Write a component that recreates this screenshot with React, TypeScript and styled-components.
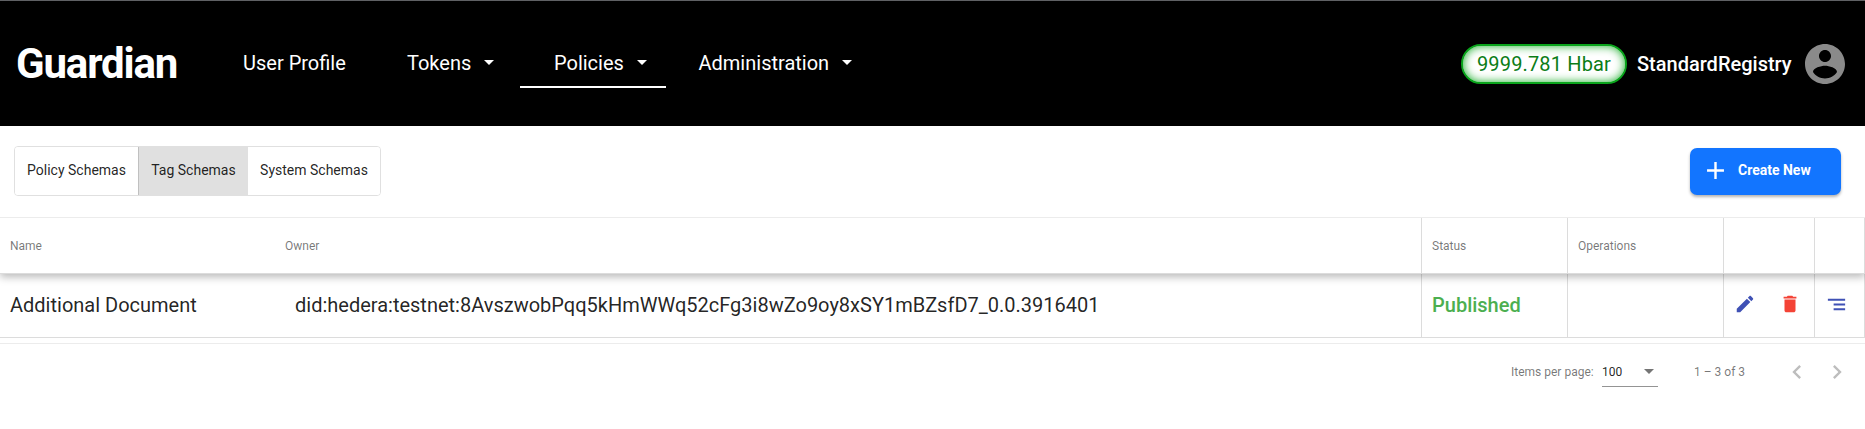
import React from "react";
import styled, { createGlobalStyle } from "styled-components";

const GlobalStyle = createGlobalStyle`
  * { box-sizing: border-box; }
  body { margin: 0; background: #fff; font-family: Roboto, "Liberation Sans", sans-serif; color: rgba(0, 0, 0, 0.87); }
  button { font: inherit; color: inherit; background: none; border: 0; padding: 0; }
`;

const Page = styled.div`
  height: 429px;
  overflow: hidden;
  white-space: nowrap;
`;

const Header = styled.header`
  display: flex;
  align-items: center;
  height: 126px;
  padding: 0 16px 0 16px;
  border-top: 1px solid #5f6164;
  background: #000;
  color: #fff;
`;

const Brand = styled.div`
  width: 193px;
  font-size: 42px;
  font-weight: 700;
  line-height: 50px;
  letter-spacing: -1.15px;
`;

const Nav = styled.nav`
  display: flex;
  flex: 1;
  margin-top: -1px;
`;

const NavItem = styled.a<{ $width: number; $active?: boolean; $start?: number; $end?: number }>`
  display: flex;
  align-items: center;
  justify-content: space-between;
  width: ${(p) => p.$width}px;
  height: 50px;
  padding: 0 ${(p) => p.$end ?? 19}px 1px ${(p) => p.$start ?? 34}px;
  border-bottom: 2px solid ${(p) => (p.$active ? "#fff" : "transparent")};
  border-top: 2px solid transparent;
  font-size: 20px;
`;

const Caret = styled.span<{ $color?: string }>`
  border: 5px solid transparent;
  border-top-color: ${(p) => p.$color ?? "#fff"};
  border-bottom-width: 0;
`;

const Balance = styled.div`
  display: flex;
  align-items: center;
  justify-content: center;
  width: 166px;
  height: 40px;
  margin-right: 10px;
  border: 2px solid #0aa51c;
  border-radius: 20px;
  background: #fff;
  box-shadow: inset 0 0 10px 0 #1fae2e;
  color: #0b7d17;
  font-size: 20px;
  letter-spacing: 0.15px;
`;

const UserName = styled.div`
  width: 164px;
  font-size: 20px;
  font-weight: 500;
`;

const Toolbar = styled.div`
  display: flex;
  justify-content: space-between;
  align-items: flex-start;
  height: 91px;
  padding: 20px 24px 0 14px;
`;

const Tabs = styled.div`
  display: flex;
  height: 50px;
  border: 1px solid #e0e0e0;
  border-radius: 4px;
  overflow: hidden;
`;

const Tab = styled.button<{ $width: number; $active?: boolean }>`
  width: ${(p) => p.$width}px;
  padding-bottom: 2px;
  background: ${(p) => (p.$active ? "#e0e0e0" : "#fff")};
  border-left: ${(p) => (p.$active ? "1px solid #c0c0c0" : "0")};
  font-size: 14px;
`;

const CreateButton = styled.button`
  display: flex;
  align-items: center;
  width: 151px;
  height: 47px;
  margin-top: 2px;
  padding: 0 0 3px 11px;
  gap: 8px;
  border-radius: 7px;
  background: #1275ff;
  box-shadow: 0 2px 3px rgba(0, 0, 0, 0.3);
  color: #fff;
  font-size: 14px;
  font-weight: 700;
`;

const Table = styled.div`
  border-top: 1px solid #ececec;
  overflow: hidden;
`;

const Row = styled.div<{ $head?: boolean }>`
  display: grid;
  grid-template-columns: 275px 1146px 146px 156px 91px 51px;
  height: ${(p) => (p.$head ? 56 : 64)}px;
  position: relative;
  z-index: ${(p) => (p.$head ? 1 : 0)};
  background: #fff;
  border-bottom: 1px solid #dcdcdc;
  box-shadow: ${(p) => (p.$head ? "0 3px 8px rgba(0, 0, 0, 0.28)" : "none")};
  font-size: ${(p) => (p.$head ? 12 : 20)}px;
  color: ${(p) => (p.$head ? "rgba(0,0,0,0.54)" : "rgba(0,0,0,0.87)")};
`;

const Cell = styled.div<{ $divided?: boolean; $indent?: number; $last?: boolean; $lift?: number }>`
  display: flex;
  align-items: center;
  padding: 0 0 ${(p) => p.$lift ?? 0}px ${(p) => p.$indent ?? 10}px;
  border-left: ${(p) => (p.$divided ? "1px solid #dcdcdc" : "0")};
  border-right: ${(p) => (p.$last ? "1px solid #dcdcdc" : "0")};
`;

const Status = styled.span`
  color: #4caf50;
  font-weight: 500;
`;

const Actions = styled.div`
  display: flex;
  gap: 23px;
`;

const Paginator = styled.footer`
  display: flex;
  align-items: center;
  height: 57px;
  margin-top: 5px;
  padding-left: 1511px;
  border-top: 1px solid #ececec;
  color: rgba(0, 0, 0, 0.54);
  font-size: 12px;
`;

const PageLabel = styled.span`
  width: 91px;
`;

const PageSize = styled.div`
  display: flex;
  align-items: center;
  justify-content: space-between;
  width: 56px;
  height: 27px;
  margin-top: 2px;
  padding: 0 4px 2px 0;
  border-bottom: 1px solid #949494;
  color: rgba(0, 0, 0, 0.87);
`;

const Range = styled.span`
  width: 89px;
  margin-left: 36px;
`;

const Pager = styled.div`
  display: flex;
  gap: 12px;
`;

const Icon = ({ d, size = 24, color }: { d: string; size?: number; color: string }) => (
  <svg width={size} height={size} viewBox="0 0 24 24" fill={color}>
    <path d={d} />
  </svg>
);

const paths = {
  account:
    "M12 2C6.48 2 2 6.48 2 12s4.48 10 10 10 10-4.48 10-10S17.52 2 12 2zm0 3c1.66 0 3 1.34 3 3s-1.34 3-3 3-3-1.34-3-3 1.34-3 3-3zm0 14.2c-2.5 0-4.71-1.28-6-3.22.03-1.99 4-3.08 6-3.08 1.99 0 5.97 1.09 6 3.08-1.29 1.94-3.5 3.22-6 3.22z",
  add: "M19 13h-6v6h-2v-6H5v-2h6V5h2v6h6v2z",
  edit: "M3 17.25V21h3.75L17.81 9.94l-3.75-3.75L3 17.25zM20.71 7.04c.39-.39.39-1.02 0-1.41l-2.34-2.34c-.39-.39-1.02-.39-1.41 0l-1.83 1.83 3.75 3.75 1.83-1.83z",
  remove: "M6 19c0 1.1.9 2 2 2h8c1.1 0 2-.9 2-2V7H6v12zM19 4h-3.5l-1-1h-5l-1 1H5v2h14V4z",
  segment: "M9 18h12v-2H9v2zM3 6v2h18V6H3zm6 7h12v-2H9v2z",
  prev: "M15.41 7.41L14 6l-6 6 6 6 1.41-1.41L10.83 12z",
  next: "M10 6L8.59 7.41 13.17 12l-4.58 4.59L10 18l6-6z",
};

export default function App() {
  return (
    <Page>
      <GlobalStyle />
      <Header>
        <Brand>Guardian</Brand>
        <Nav>
          <NavItem $width={165}>User Profile</NavItem>
          <NavItem $width={146} $start={33} $end={26}>Tokens<Caret /></NavItem>
          <NavItem $width={146} $active>Policies<Caret /></NavItem>
          <NavItem $width={205} $start={32.5}>Administration<Caret /></NavItem>
        </Nav>
        <Balance>9999.781 Hbar</Balance>
        <UserName>StandardRegistry</UserName>
        <Icon d={paths.account} size={48} color="#8a8a8a" />
      </Header>
      <Toolbar>
        <Tabs>
          <Tab $width={123}>Policy Schemas</Tab>
          <Tab $width={110} $active>Tag Schemas</Tab>
          <Tab $width={132}>System Schemas</Tab>
        </Tabs>
        <CreateButton>
          <Icon d={paths.add} size={29} color="#fff" />
          Create New
        </CreateButton>
      </Toolbar>
      <Table>
        <Row $head>
          <Cell>Name</Cell>
          <Cell>Owner</Cell>
          <Cell $divided>Status</Cell>
          <Cell $divided>Operations</Cell>
          <Cell $divided />
          <Cell $divided $last />
        </Row>
        <Row>
          <Cell $lift={2}>Additional Document</Cell>
          <Cell $lift={2} $indent={20}>did:hedera:testnet:8AvszwobPqq5kHmWWq52cFg3i8wZo9oy8xSY1mBZsfD7_0.0.3916401</Cell>
          <Cell $lift={2} $divided><Status>Published</Status></Cell>
          <Cell $divided />
          <Cell $lift={3} $divided>
            <Actions>
              <Icon d={paths.edit} size={22} color="#3f51b5" />
              <Icon d={paths.remove} size={22} color="#f44336" />
            </Actions>
          </Cell>
          <Cell $lift={3} $divided $last><Icon d={paths.segment} size={23} color="#3f51b5" /></Cell>
        </Row>
      </Table>
      <Paginator>
        <PageLabel>Items per page:</PageLabel>
        <PageSize>100<Caret $color="#757575" /></PageSize>
        <Range>1 – 3 of 3</Range>
        <Pager>
          <Icon d={paths.prev} size={28} color="#bdbdbd" />
          <Icon d={paths.next} size={28} color="#bdbdbd" />
        </Pager>
      </Paginator>
    </Page>
  );
}
